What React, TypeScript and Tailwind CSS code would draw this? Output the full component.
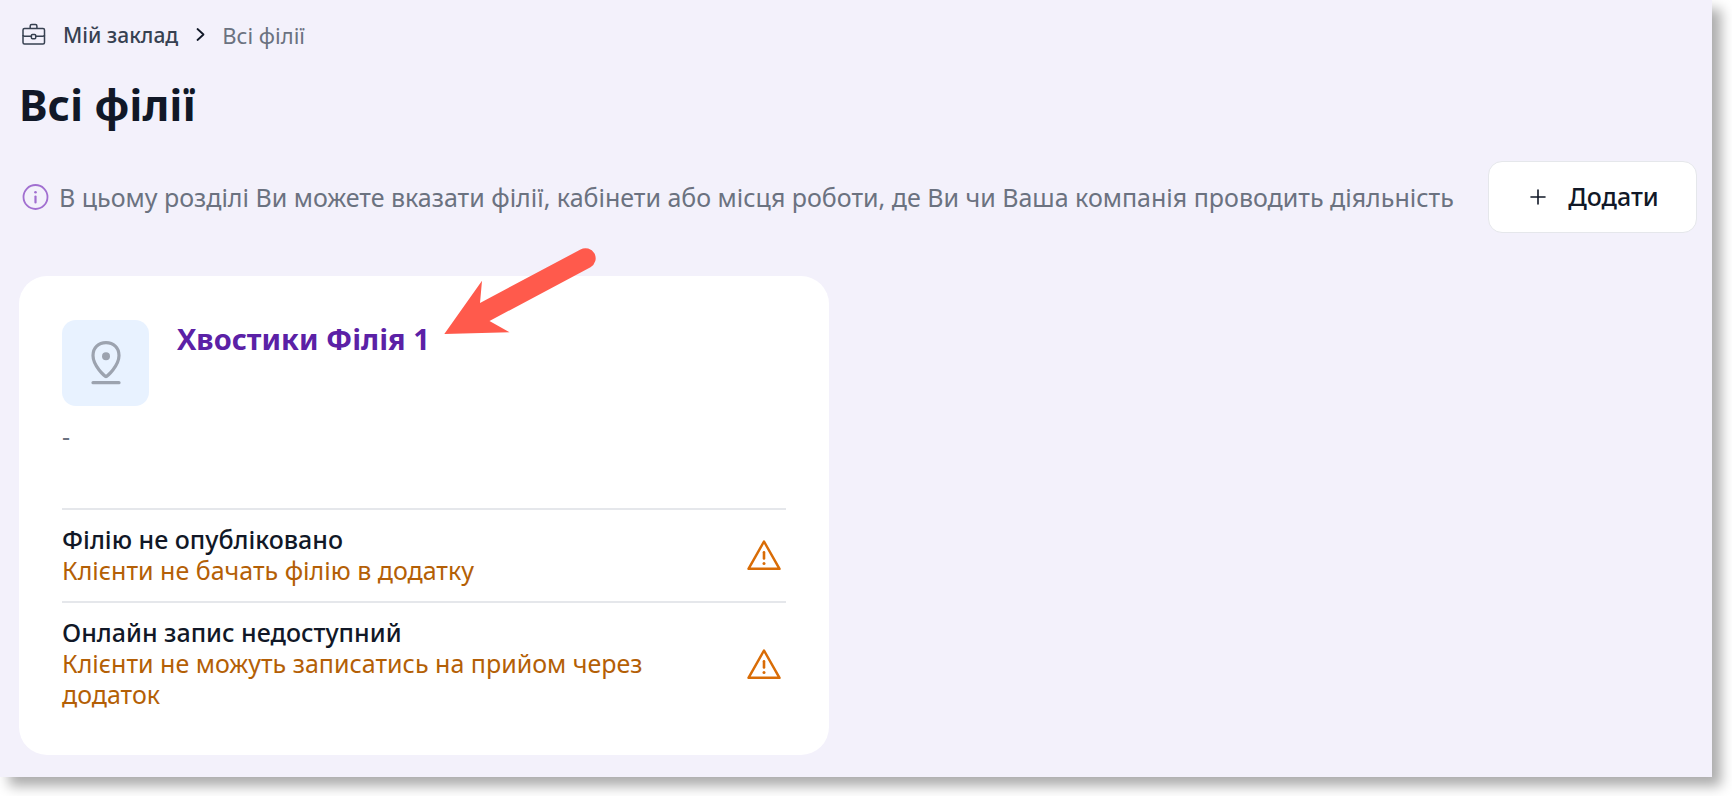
import React from "react";

function BriefcaseIcon() {
  return (
    <svg width="24" height="24" viewBox="0 0 24 24" fill="none" stroke="#374151" strokeWidth="1.5" strokeLinejoin="round" aria-hidden="true">
      <rect x="1" y="5.500" width="21.5" height="15.5" rx="1.5" />
      <path d="M8.2 5.500V3Q8.2 1.500 9.7 1.500H13.4Q14.9 1.500 14.9 3V5.500" />
      <path d="M1 12.1Q1 13.3 2.5 13.3H9.3M13.8 13.3H21Q22.5 13.3 22.5 12.1" />
      <rect x="9.4" y="11.5" width="4.3" height="4.2" rx="1" />
    </svg>
  );
}

function ChevronIcon() {
  return (
    <svg width="10" height="16" viewBox="0 0 10 16" fill="none" stroke="#111827" strokeWidth="1.8" strokeLinecap="round" strokeLinejoin="round" aria-hidden="true">
      <path d="M2.500 2L8.500 7.500L2.500 13" />
    </svg>
  );
}

function InfoIcon() {
  return (
    <svg className="shrink-0" width="28" height="28" viewBox="0 0 28 28" fill="none" stroke="#a16fd0" strokeLinecap="round" aria-hidden="true">
      <circle cx="13.500" cy="14" r="12" strokeWidth="1.8" />
      <path d="M13.500 13.5V19.5" strokeWidth="2.2" />
      <circle cx="13.500" cy="9.2" r="1.3" fill="#a16fd0" stroke="none" />
    </svg>
  );
}

function PlusIcon() {
  return (
    <svg width="16" height="16" viewBox="0 0 16 16" fill="none" stroke="#111827" strokeWidth="1.6" strokeLinecap="round" aria-hidden="true">
      <path d="M8 1V15M1 8H15" />
    </svg>
  );
}

function PinIcon() {
  return (
    <svg width="32" height="48" viewBox="0 0 32 48" fill="none" stroke="#9ca3af" strokeWidth="3.2" strokeLinecap="round" strokeLinejoin="round" aria-hidden="true">
      <path d="M16 37.6C15 37.6 3 27 3 16.6C3 8.6 8.5 3.7 16 3.7C23.5 3.7 29 8.6 29 16.6C29 27 17 37.6 16 37.6Z" />
      <circle cx="16" cy="17.2" r="4" fill="#9ca3af" stroke="none" />
      <path d="M3 43.7H29" />
    </svg>
  );
}

function WarningIcon() {
  return (
    <svg className="shrink-0" width="36" height="32" viewBox="0 0 36 32" fill="none" stroke="#d96c06" strokeLinejoin="round" strokeLinecap="round" aria-hidden="true">
      <path d="M18 2.5L33.5 29.8H2.5Z" strokeWidth="2.5" />
      <path d="M18 13.2V19.5" strokeWidth="2.6" />
      <circle cx="18" cy="24.4" r="1.5" fill="#d96c06" stroke="none" />
    </svg>
  );
}

function StatusRow({ title, note }: { title: string; note: string }) {
  return (
    <li className="flex items-center justify-between border-t-2 border-[#e5e7eb] pt-[14px] pb-[15px] pr-1 text-[25px] leading-[31px] last:pb-0">
      <div className="max-w-[620px]">
        <p className="font-medium text-[#111827]">{title}</p>
        <p className="text-[#b45f06]">{note}</p>
      </div>
      <WarningIcon />
    </li>
  );
}

function Arrow() {
  return (
    <svg className="pointer-events-none absolute -top-8 left-[421px]" width="160" height="96" viewBox="0 0 160 96" aria-hidden="true">
      <path fill="#ff5a4c" d="M4.3 90L42 36.8L40 59L140.5 5.5A10 10 0 0 1 150.5 23.2L49.5 77L69.5 88.2Z" />
    </svg>
  );
}

export default function App() {
  return (
    <div className="bg-white pr-5 pb-5 font-['Noto_Sans',sans-serif]">
      <main className="bg-[#f3f1fb] pt-[19px] pr-[15px] pb-[22px] pl-[19px] shadow-[9px_9px_12px_rgba(0,0,0,0.33)]">
        <nav aria-label="Шлях" className="flex items-center gap-[17px] pl-[3px] leading-8">
          <BriefcaseIcon />
          <a href="#" className="text-[21px] font-medium text-[#374151]">Мій заклад</a>
          <ChevronIcon />
          <span className="text-[22px] text-[#6b7280]">Всі філії</span>
        </nav>
        <h1 className="mt-6 text-[43px] leading-[60px] font-bold text-[#111827]">Всі філії</h1>
        <div className="mt-[26px] flex items-center justify-between">
          <p className="flex items-center gap-[9px] pl-[3px] text-[25px] leading-9 text-[#6b7280]">
            <InfoIcon />
            <span className="whitespace-nowrap">В цьому розділі Ви можете вказати філії, кабінети або місця роботи, де Ви чи Ваша компанія проводить діяльність</span>
          </p>
          <button type="button" className="flex h-[72px] w-[209px] shrink-0 items-center justify-center gap-[22px] rounded-[14px] border border-[#e5e7eb] bg-white pl-1 text-[25px] font-medium text-[#111827]">
            <PlusIcon />
            Додати
          </button>
        </div>
        <div className="mt-[43px] grid grid-cols-2 gap-[58px]">
          <article className="relative rounded-[28px] bg-white px-[43px] pt-11 pb-[45px]">
            <header className="flex gap-7">
              <div className="flex h-[86px] w-[87px] items-center justify-center rounded-[14px] bg-[#e8f2ff]">
                <PinIcon />
              </div>
              <h2 className="text-[29px] leading-[38px] font-bold text-[#5b21a6]">Хвостики Філія 1</h2>
            </header>
            <p className="mt-[15px] text-[25px] leading-[31px] text-[#6b7280]">-</p>
            <ul className="mt-14">
              <StatusRow title="Філію не опубліковано" note="Клієнти не бачать філію в додатку" />
              <StatusRow title="Онлайн запис недоступний" note="Клієнти не можуть записатись на прийом через додаток" />
            </ul>
            <Arrow />
          </article>
        </div>
      </main>
    </div>
  );
}
